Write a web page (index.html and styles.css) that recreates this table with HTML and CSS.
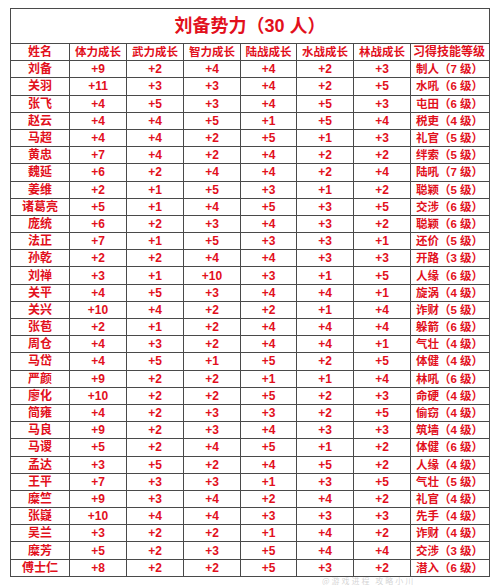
FILE: index.html
```html
<!DOCTYPE html>
<html lang="zh">
<head>
<meta charset="utf-8">
<title>刘备势力</title>
<link rel="stylesheet" href="styles.css">
</head>
<body>
<div class="page">
<table class="sheet">
<colgroup>
<col class="c-name"><col class="c-num"><col class="c-num"><col class="c-num"><col class="c-num2"><col class="c-num"><col class="c-num"><col class="c-skill">
</colgroup>
<tbody>
<tr class="title"><td colspan="8">刘备势力（30 人）</td></tr>
<tr class="head"><td>姓名</td><td>体力成长</td><td>武力成长</td><td>智力成长</td><td>陆战成长</td><td>水战成长</td><td>林战成长</td><td>习得技能等级</td></tr>
<tr><td>刘备</td><td>+9</td><td>+2</td><td>+4</td><td>+4</td><td>+2</td><td>+3</td><td>制人（7 级）</td></tr>
<tr><td>关羽</td><td>+11</td><td>+3</td><td>+3</td><td>+4</td><td>+2</td><td>+5</td><td>水吼（6 级）</td></tr>
<tr><td>张飞</td><td>+4</td><td>+5</td><td>+3</td><td>+4</td><td>+5</td><td>+3</td><td>屯田（6 级）</td></tr>
<tr><td>赵云</td><td>+4</td><td>+4</td><td>+5</td><td>+1</td><td>+5</td><td>+4</td><td>税吏（4 级）</td></tr>
<tr><td>马超</td><td>+4</td><td>+4</td><td>+2</td><td>+5</td><td>+1</td><td>+3</td><td>礼官（5 级）</td></tr>
<tr><td>黄忠</td><td>+7</td><td>+4</td><td>+2</td><td>+4</td><td>+2</td><td>+2</td><td>绊索（5 级）</td></tr>
<tr><td>魏延</td><td>+6</td><td>+2</td><td>+4</td><td>+4</td><td>+2</td><td>+4</td><td>陆吼（7 级）</td></tr>
<tr><td>姜维</td><td>+2</td><td>+1</td><td>+5</td><td>+3</td><td>+1</td><td>+2</td><td>聪颖（5 级）</td></tr>
<tr><td>诸葛亮</td><td>+5</td><td>+1</td><td>+4</td><td>+5</td><td>+3</td><td>+5</td><td>交涉（6 级）</td></tr>
<tr><td>庞统</td><td>+6</td><td>+2</td><td>+3</td><td>+4</td><td>+3</td><td>+2</td><td>聪颖（6 级）</td></tr>
<tr><td>法正</td><td>+7</td><td>+1</td><td>+5</td><td>+3</td><td>+3</td><td>+1</td><td>还价（5 级）</td></tr>
<tr><td>孙乾</td><td>+2</td><td>+2</td><td>+4</td><td>+4</td><td>+3</td><td>+3</td><td>开路（3 级）</td></tr>
<tr><td>刘禅</td><td>+3</td><td>+1</td><td>+10</td><td>+3</td><td>+1</td><td>+5</td><td>人缘（6 级）</td></tr>
<tr><td>关平</td><td>+4</td><td>+5</td><td>+3</td><td>+4</td><td>+4</td><td>+1</td><td>旋涡（4 级）</td></tr>
<tr><td>关兴</td><td>+10</td><td>+4</td><td>+2</td><td>+2</td><td>+1</td><td>+4</td><td>诈财（5 级）</td></tr>
<tr><td>张苞</td><td>+2</td><td>+1</td><td>+2</td><td>+4</td><td>+4</td><td>+4</td><td>躲箭（6 级）</td></tr>
<tr><td>周仓</td><td>+4</td><td>+3</td><td>+2</td><td>+4</td><td>+4</td><td>+1</td><td>气壮（4 级）</td></tr>
<tr><td>马岱</td><td>+4</td><td>+5</td><td>+1</td><td>+5</td><td>+2</td><td>+5</td><td>体健（4 级）</td></tr>
<tr><td>严颜</td><td>+9</td><td>+2</td><td>+2</td><td>+1</td><td>+1</td><td>+4</td><td>林吼（6 级）</td></tr>
<tr><td>廖化</td><td>+10</td><td>+2</td><td>+2</td><td>+5</td><td>+2</td><td>+3</td><td>命硬（4 级）</td></tr>
<tr><td>简雍</td><td>+4</td><td>+2</td><td>+3</td><td>+3</td><td>+2</td><td>+5</td><td>偷窃（4 级）</td></tr>
<tr><td>马良</td><td>+9</td><td>+2</td><td>+3</td><td>+4</td><td>+3</td><td>+3</td><td>筑墙（4 级）</td></tr>
<tr><td>马谡</td><td>+5</td><td>+2</td><td>+4</td><td>+5</td><td>+1</td><td>+2</td><td>体健（6 级）</td></tr>
<tr><td>孟达</td><td>+3</td><td>+5</td><td>+2</td><td>+4</td><td>+5</td><td>+2</td><td>人缘（4 级）</td></tr>
<tr><td>王平</td><td>+7</td><td>+3</td><td>+3</td><td>+1</td><td>+3</td><td>+5</td><td>气壮（5 级）</td></tr>
<tr><td>糜竺</td><td>+9</td><td>+3</td><td>+4</td><td>+2</td><td>+4</td><td>+2</td><td>礼官（4 级）</td></tr>
<tr><td>张嶷</td><td>+10</td><td>+4</td><td>+4</td><td>+3</td><td>+3</td><td>+3</td><td>先手（4 级）</td></tr>
<tr><td>吴兰</td><td>+3</td><td>+2</td><td>+2</td><td>+1</td><td>+4</td><td>+2</td><td>诈财（4 级）</td></tr>
<tr><td>糜芳</td><td>+5</td><td>+2</td><td>+3</td><td>+5</td><td>+4</td><td>+4</td><td>交涉（3 级）</td></tr>
<tr><td>傅士仁</td><td>+8</td><td>+2</td><td>+2</td><td>+5</td><td>+3</td><td>+2</td><td>潜入（6 级）</td></tr>
</tbody>
</table>
<div class="watermark">@游戏进程 攻略小川</div>
</div>
</body>
</html>
```
FILE: styles.css
```css
html, body {
  margin: 0;
  padding: 0;
  background: #ffffff;
}
.page {
  position: relative;
  width: 500px;
  height: 585px;
  padding: 8px 0 0 10px;
  box-sizing: border-box;
}
.sheet {
  border-collapse: collapse;
  table-layout: fixed;
  width: 480px;
  font-family: "Liberation Sans", "Noto Sans CJK SC", sans-serif;
  font-weight: bold;
  color: #e2101c;
}
.c-name { width: 59px; }
.c-num { width: 57px; }
.c-num2 { width: 56px; }
.c-skill { width: 79px; }
.sheet td {
  border: 1px solid #4a4a4a;
  padding: 0;
  height: 16.2px;
  line-height: 14px;
  font-size: 12px;
  text-align: center;
  white-space: nowrap;
  overflow: hidden;
}
.sheet .title td {
  height: 34px;
  font-size: 18px;
  line-height: 20px;
}
.sheet .head td {
  font-size: 11.5px;
}
.sheet td:first-child {
  font-size: 12px;
}
.sheet tr td:last-child {
  font-size: 11.5px;
  text-align: left;
  padding-left: 5px;
}
.sheet .title td:last-child {
  text-align: center;
  padding-left: 0;
  font-size: 18px;
}
.sheet .head td:last-child {
  padding-left: 2px;
  font-size: 12px;
}
.watermark {
  position: absolute;
  left: 322px;
  top: 577px;
  font-family: "Noto Sans CJK SC", sans-serif;
  font-size: 8px;
  line-height: 8px;
  color: rgba(170, 170, 170, 0.5);
  letter-spacing: 2px;
}
```
